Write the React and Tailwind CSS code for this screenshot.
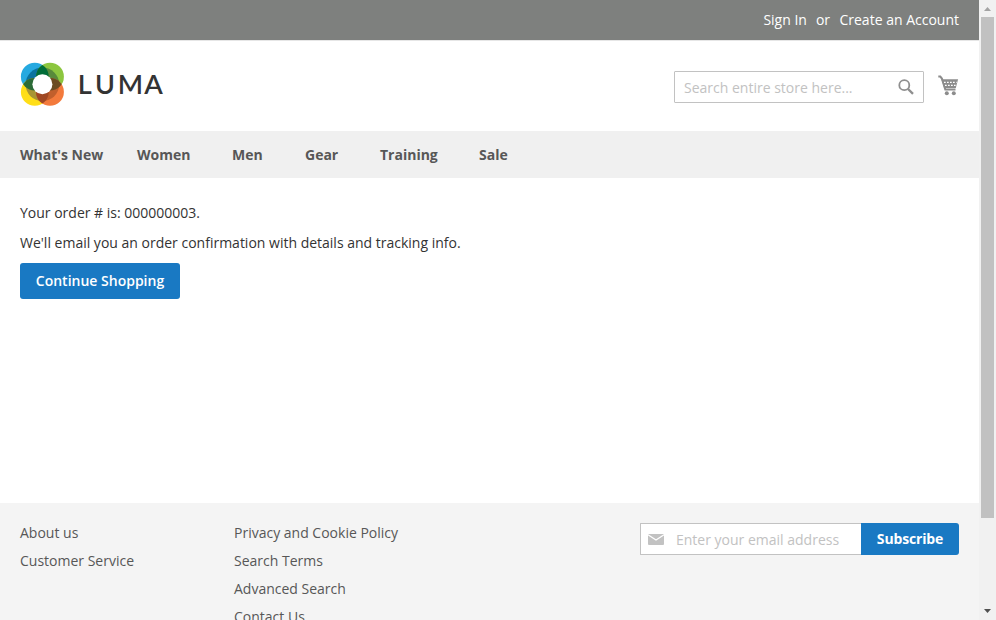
const NAV = [
  ["What's New", "w-[117px]"],
  ["Women", "w-[95px]"],
  ["Men", "w-[73px]"],
  ["Gear", "w-[75px]"],
  ["Training", "w-[99px]"],
  ["Sale", "w-[60px]"],
];

function LogoMark() {
  return (
    <svg width="44" height="44" viewBox="0 0 44 44" className="block">
      <defs>
        <clipPath id="ring"><circle cx="22.4" cy="22.3" r="16.8" /></clipPath>
        <clipPath id="tl"><circle cx="14.8" cy="14.7" r="13.9" /></clipPath>
        <clipPath id="br"><circle cx="30" cy="29.9" r="13.9" /></clipPath>
      </defs>
      <circle cx="14.8" cy="14.7" r="13.9" fill="#26a9e0" />
      <circle cx="30" cy="14.7" r="13.9" fill="#8cc63f" />
      <circle cx="14.8" cy="29.9" r="13.9" fill="#ffde17" />
      <circle cx="30" cy="29.9" r="13.9" fill="#f37a3c" />
      <g clipPath="url(#ring)">
        <circle cx="14.8" cy="14.7" r="13.9" fill="#0b739f" />
        <circle cx="30" cy="14.7" r="13.9" fill="#588a3b" />
        <circle cx="14.8" cy="29.9" r="13.9" fill="#a99533" />
        <circle cx="30" cy="29.9" r="13.9" fill="#c15f2c" />
      </g>
      <g clipPath="url(#tl)">
        <circle cx="30" cy="14.7" r="13.9" fill="#006d38" />
        <circle cx="14.8" cy="29.9" r="13.9" fill="#2b6b37" />
      </g>
      <g clipPath="url(#br)">
        <circle cx="30" cy="14.7" r="13.9" fill="#6b4c22" />
        <circle cx="14.8" cy="29.9" r="13.9" fill="#a04823" />
      </g>
      <circle cx="22.4" cy="22.3" r="10" fill="#fff" />
    </svg>
  );
}

function SearchIcon() {
  return (
    <svg width="16" height="16" viewBox="0 0 16 16" className="block" fill="none" stroke="#8f8f8f">
      <circle cx="6.3" cy="6.2" r="5" strokeWidth="1.8" />
      <path d="M10 10l5 4.8" strokeWidth="2.4" />
    </svg>
  );
}

function CartIcon() {
  return (
    <svg width="21" height="21" viewBox="0 0 21 21" className="block" fill="none" stroke="#8c8c8c">
      <path d="M.3 1.6h2l1.6 2 3.4 10.8h10.2" strokeWidth="2" />
      <path d="M3.4 4.2h16.7l-2.3 8.8H6.2z" fill="#8c8c8c" stroke="none" />
      <path d="M6 7.4h12.6M7 10.4h10.6" stroke="#fff" strokeWidth="1.3" strokeDasharray="1.7 1.3" />
      <circle cx="8.8" cy="18.2" r="2" fill="#8c8c8c" stroke="none" />
      <circle cx="15.8" cy="18.2" r="2" fill="#8c8c8c" stroke="none" />
    </svg>
  );
}

export default function App() {
  return (
    <div className="flex h-[620px] w-[996px] overflow-hidden bg-white font-['Open_Sans',sans-serif] text-[14px] leading-5 text-[#333]">
      <div className="flex w-[979px] flex-col">
        <div className="flex h-10 shrink-0 justify-end bg-[#7e807e] pt-[10px] pr-5 text-white">
          <span>Sign In</span>
          <span className="ml-[9px]">or</span>
          <span className="ml-[9.4px]">Create an Account</span>
        </div>
        <header className="flex h-[91px] shrink-0 items-start border-t border-[#e6e6e6] pr-5 pl-5">
          <div className="flex pt-[21px]">
            <LogoMark />
            <svg width="110" height="44" className="block" fill="#333">
              <text y="32" x="13.8 31 53.8 80.3" fontFamily="Lato, sans-serif" fontSize="27" fontWeight="600">LUMA</text>
            </svg>
          </div>
          <div className="mt-[30px] ml-auto flex h-8 w-[250px] items-center justify-between rounded-[1px] border border-[#c2c2c2] pr-[9px] pl-[9px]">
            <span className="pt-[2px] text-[#c2c2c2]">Search entire store here...</span>
            <SearchIcon />
          </div>
          <div className="mt-[34px] ml-[14px]"><CartIcon /></div>
        </header>
        <nav className="flex h-[47px] shrink-0 items-center bg-[#f0f0f0] pl-5 font-bold text-[#575757]">
          {NAV.map(([label, width]) => (
            <span key={label} className={width}>{label}</span>
          ))}
        </nav>
        <main className="flex h-[325px] shrink-0 flex-col items-start pt-[25px] pl-5">
          <p className="mb-[10px]">Your order # is: 000000003.</p>
          <p className="mb-[10px]">We'll email you an order confirmation with details and tracking info.</p>
          <button className="h-9 w-40 rounded-[3px] bg-[#1979c3] font-semibold text-white">Continue Shopping</button>
        </main>
        <footer className="flex h-[117px] shrink-0 items-start overflow-hidden bg-[#f4f4f4] pt-5 pr-5 pl-5 text-[#575757]">
          <ul className="w-[214px] space-y-2">
            <li>About us</li>
            <li>Customer Service</li>
          </ul>
          <ul className="space-y-2">
            <li>Privacy and Cookie Policy</li>
            <li>Search Terms</li>
            <li>Advanced Search</li>
            <li>Contact Us</li>
          </ul>
          <div className="ml-auto flex h-8">
            <div className="flex w-[221px] items-center rounded-l-[1px] border border-r-0 border-[#c2c2c2] bg-white pl-[7px]">
              <svg width="16" height="11" viewBox="0 0 16 11" className="block">
                <rect width="16" height="11" rx="1" fill="#c2c2c2" />
                <path d="M0 .8l8 5.2 8-5.2" fill="none" stroke="#fff" strokeWidth="1.3" />
              </svg>
              <span className="ml-3 pt-[2px] text-[#c2c2c2]">Enter your email address</span>
            </div>
            <button className="w-[98px] rounded-r-[3px] bg-[#1979c3] font-bold tracking-[-0.15px] text-white">Subscribe</button>
          </div>
        </footer>
      </div>
      <div className="flex w-[17px] flex-col items-center bg-[#f1f1f1]">
        <svg width="17" height="17" viewBox="0 0 17 17" className="block"><path d="M5 11h7L8.5 7z" fill="#a3a3a3" /></svg>
        <div className="h-[501px] w-[13px] bg-[#c1c1c1]" />
        <svg width="17" height="17" viewBox="0 0 17 17" className="mt-auto block"><path d="M5 6h7l-3.5 4z" fill="#505050" /></svg>
      </div>
    </div>
  );
}
